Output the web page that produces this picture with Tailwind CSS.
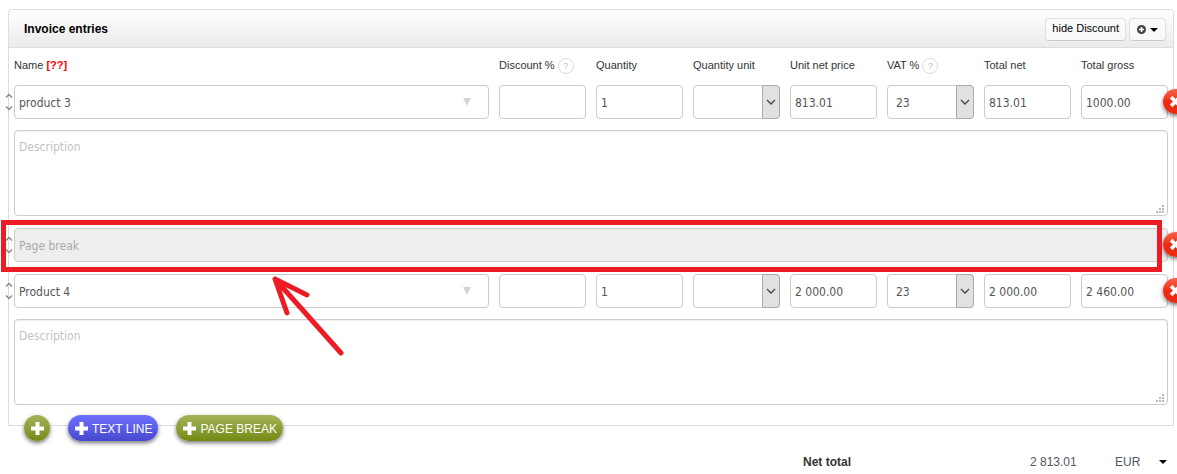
<!DOCTYPE html>
<html lang="en">
<head>
    <meta charset="UTF-8">
    <meta name="viewport" content="width=device-width, initial-scale=1.0">
    <title>Invoice entries</title>
    <script src="https://cdn.jsdelivr.net/npm/@tailwindcss/browser@4"></script>
</head>
<body class="bg-white font-['Liberation_Sans',Arial,sans-serif] text-[#333]">
    <!-- shared icons -->
    <svg class="hidden">
        <symbol id="sort" viewBox="0 0 8 18"><path d="m1 4.5 3-3 3 3M1 13.5l3 3 3-3" fill="none" stroke="#888" stroke-width="1.5"/></symbol>
        <symbol id="plus" viewBox="0 0 13 13"><path d="M4.5 0h4v4.5H13v4H8.5V13h-4V8.5H0v-4h4.5z" fill="#fff"/></symbol>
        <symbol id="cross" viewBox="0 0 12 12"><path d="m3.2 3.2 5.6 5.6M8.8 3.2 3.2 8.8" stroke="#fff" stroke-width="3.4" stroke-linecap="square"/></symbol>
        <symbol id="chevron" viewBox="0 0 10 6"><path d="m1 1 4 4 4-4" fill="none" stroke="#444" stroke-width="1.3"/></symbol>
        <symbol id="grip" viewBox="0 0 8 8"><path d="M6 0h2v2H6zM3 3h2v2H3zM6 3h2v2H6zM0 6h2v2H0zM3 6h2v2H3zM6 6h2v2H6z" fill="#b9b9b9"/></symbol>
    </svg>

    <main class="overflow-hidden pt-[9px] pl-2 pr-[3px] pb-1">
        <section class="border border-[#ddd] rounded-t">
            <header class="flex items-center justify-between h-[38px] pl-[15px] pr-[7px] rounded-t border-b border-[#ddd] bg-linear-to-b from-white to-[#ebebeb]">
                <h1 class="text-xs font-bold text-black">Invoice entries</h1>
                <div class="flex gap-[3px] pt-0.5">
                    <button class="h-[23px] px-1.5 pb-0.5 rounded-sm border border-[#e0e0e0] border-b-[#ccc] bg-[#fafafa] text-[11px] text-black whitespace-nowrap">hide Discount</button>
                    <button class="flex items-center gap-1 h-[23px] px-[7px] rounded-sm border border-[#e0e0e0] border-b-[#ccc] bg-[#fafafa]" aria-label="Add column">
                        <svg class="size-[9px]" viewBox="0 0 9 9"><circle cx="4.5" cy="4.5" r="4.5" fill="#444"/><path d="M4.5 2v5M2 4.5h5" stroke="#fff" stroke-width="1.6"/></svg>
                        <svg class="w-2 h-1" viewBox="0 0 8 4"><path d="M0 0h8L4 4z" fill="#000"/></svg>
                    </button>
                </div>
            </header>

            <div class="px-[5px] pb-5">
                <div class="grid grid-cols-[1fr_repeat(7,87px)] gap-x-2.5 items-center h-[37px] pb-0.5 text-[11px] whitespace-nowrap">
                    <span>Name <b class="text-[#f00]">[??]</b></span>
                    <span class="flex items-center gap-[3px]">Discount % <button class="size-4 rounded-full border border-[#ddd] text-[9px] leading-3 text-[#bbb]">?</button></span>
                    <span>Quantity</span>
                    <span>Quantity unit</span>
                    <span>Unit net price</span>
                    <span class="flex items-center gap-[3px]">VAT % <button class="size-4 rounded-full border border-[#ddd] text-[9px] leading-3 text-[#bbb]">?</button></span>
                    <span>Total net</span>
                    <span>Total gross</span>
                </div>

                <div class="flex flex-col gap-3 font-['DejaVu_Sans_Condensed','DejaVu_Sans',sans-serif] text-xs text-[#555]" id="entries"></div>
            </div>
        </section>

        <div class="relative flex gap-[18px] -mt-[11px] pl-4 text-xs text-white">
            <button class="flex items-center justify-center size-[26px] rounded-full bg-linear-to-b from-[#a3b455] to-[#748a0c] shadow-[0_2px_4px_#0008]" aria-label="Add product">
                <svg class="size-[13px]"><use href="#plus"/></svg>
            </button>
            <button class="flex items-center gap-1 h-[26px] pl-[7px] pr-1.5 rounded-full bg-linear-to-b from-[#7070ff] to-[#4848cf] shadow-[0_2px_4px_#0008] whitespace-nowrap">
                <svg class="size-[13px]"><use href="#plus"/></svg><span class="pt-0.5">TEXT LINE</span>
            </button>
            <button class="flex items-center gap-1 h-[26px] pl-[7px] pr-1.5 rounded-full bg-linear-to-b from-[#a3b455] to-[#748a0c] shadow-[0_2px_4px_#0008] whitespace-nowrap">
                <svg class="size-[13px]"><use href="#plus"/></svg><span class="pt-0.5">PAGE BREAK</span>
            </button>
        </div>

        <div class="flex items-center justify-end mt-[13px] pr-[7px] h-4 text-xs text-[#556]">
            <b class="w-[227px] text-[#333]">Net total</b>
            <span class="w-[85px]">2 813.01</span>
            <label class="relative flex items-center w-[52px]">
                <select class="appearance-none w-full outline-none" aria-label="Currency"><option>EUR</option></select>
                <svg class="absolute right-0 w-2 h-1 pointer-events-none" viewBox="0 0 8 4"><path d="M0 0h8L4 4z" fill="#000"/></svg>
            </label>
        </div>
    </main>

    <script>
        const entries = document.getElementById('entries')
        const box = 'block w-full h-[34px] px-1 pt-0.5 rounded border border-[#ccc] bg-white outline-none'

        const sort = `<button class="absolute -left-[9px] top-2 w-2 h-[18px]" aria-label="Move"><svg class="w-2 h-[18px]"><use href="#sort"/></svg></button>`
        const remove = `
            <button class="absolute -right-5 top-1 flex items-center justify-center size-[25px] rounded-full bg-linear-to-b from-[#f8604a] via-[#f02a10] to-[#e82c14] shadow-[0_2px_4px_#0008]" aria-label="Delete">
                <svg class="size-[13px]"><use href="#cross"/></svg>
            </button>`

        function input(label, value) {
            return `<input class="${box}" type="text" aria-label="${label}" value="${value}">`
        }

        function select(label, value) {
            return `
                <label class="relative block">
                    <select class="${box} appearance-none pl-2" aria-label="${label}"><option>${value}</option></select>
                    <span class="absolute right-0 inset-y-0 flex items-center justify-center w-[18px] rounded-r border border-[#aaa] bg-[#e1e1e1] pointer-events-none">
                        <svg class="w-2.5 h-1.5"><use href="#chevron"/></svg>
                    </span>
                </label>`
        }

        function product(name, price, net, gross) {
            return `
                <div class="flex flex-col gap-[11px]">
                    <div class="relative grid grid-cols-[1fr_repeat(7,87px)] gap-x-2.5">
                        ${sort}
                        <div class="relative">
                            ${input('Name', name)}
                            <svg class="absolute right-[18px] top-[13px] w-2 h-2" viewBox="0 0 8 8"><path d="M0 0h8L4 8z" fill="#d5d5d5"/></svg>
                        </div>
                        ${input('Discount %', '')}
                        ${input('Quantity', '1')}
                        ${select('Quantity unit', '')}
                        ${input('Unit net price', price)}
                        ${select('VAT %', '23')}
                        ${input('Total net', net)}
                        ${input('Total gross', gross)}
                        ${remove}
                    </div>
                    <div class="relative">
                        <textarea class="block w-full h-[86px] px-1 py-2 rounded border border-[#ccc] shadow-[inset_0_1px_1px_#0001] resize-none outline-none placeholder:text-[#c4c4c4]" placeholder="Description" aria-label="Description"></textarea>
                        <svg class="absolute right-1 bottom-[3px] size-2"><use href="#grip"/></svg>
                    </div>
                </div>`
        }

        // page break row, with the red frame and arrow drawn over it
        const pageBreak = `
            <div class="relative">
                ${sort}
                <input class="block w-full h-[34px] px-1 pt-0.5 rounded border border-[#ccc] bg-[#eee] outline-none placeholder:text-[#aaa]" type="text" placeholder="Page break" aria-label="Page break" readonly>
                ${remove}
                <div class="absolute -left-[13px] right-1.5 -top-2 -bottom-2.5 border-5 border-[#ed1c24] pointer-events-none"></div>
                <svg class="absolute z-10 left-64 top-12 w-[76px] h-20 pointer-events-none" viewBox="0 0 76 80">
                    <path d="M71 77 5 3l32 16M5 3l12 34" fill="none" stroke="#ed1c24" stroke-width="5" stroke-linecap="round" stroke-linejoin="round"/>
                </svg>
            </div>`

        entries.innerHTML = product('product 3', '813.01', '813.01', '1000.00')
            + pageBreak
            + product('Product 4', '2 000.00', '2 000.00', '2 460.00')
    </script>
</body>
</html>
